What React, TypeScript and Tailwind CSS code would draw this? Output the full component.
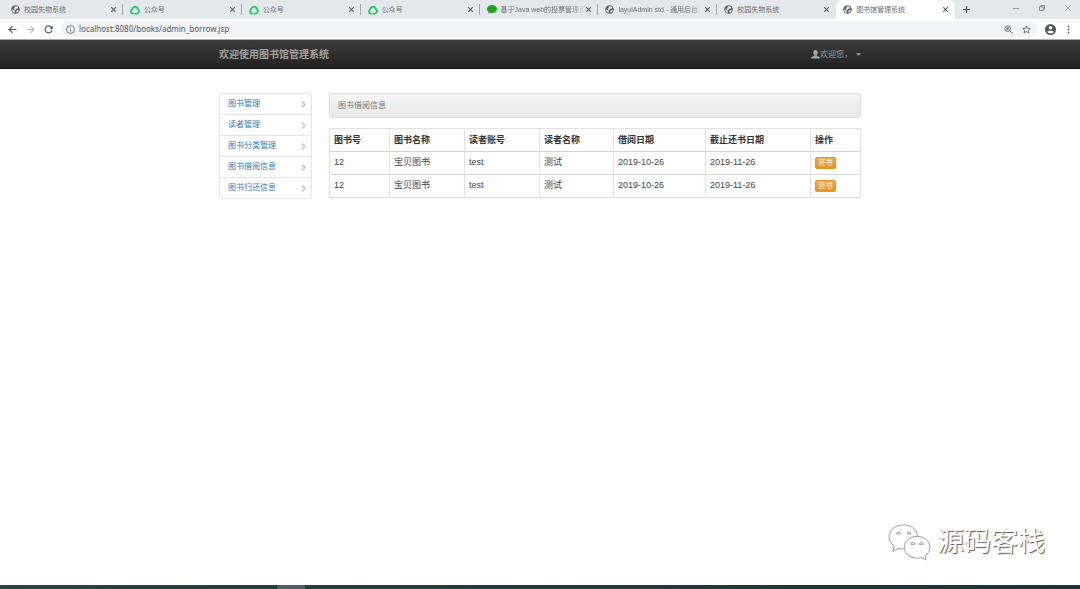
import type { ReactNode } from "react";

type TabIcon = "globe" | "ring" | "wechat";

const tabs: { title: string; icon: TabIcon; active?: boolean }[] = [
  { title: "校园失物系统", icon: "globe" },
  { title: "公众号", icon: "ring" },
  { title: "公众号", icon: "ring" },
  { title: "公众号", icon: "ring" },
  { title: "基于Java web的投票管理系", icon: "wechat" },
  { title: "layuiAdmin std - 通用后台", icon: "globe" },
  { title: "校园失物系统", icon: "globe" },
  { title: "图书馆管理系统", icon: "globe", active: true },
];

const menu = ["图书管理", "读者管理", "图书分类管理", "图书借阅信息", "图书归还信息"];

const columns = [
  { label: "图书号", width: "w-[60px]" },
  { label: "图书名称", width: "w-[75px]" },
  { label: "读者账号", width: "w-[75px]" },
  { label: "读者名称", width: "w-[74px]" },
  { label: "借阅日期", width: "w-[92px]" },
  { label: "截止还书日期", width: "w-[105px]" },
  { label: "操作", width: "w-[50px]" },
];

const rows = [
  ["12", "宝贝图书", "test", "测试", "2019-10-26", "2019-11-26"],
  ["12", "宝贝图书", "test", "测试", "2019-10-26", "2019-11-26"],
];

function Favicon({ icon }: { icon: TabIcon }) {
  if (icon === "ring") {
    return (
      <svg viewBox="0 0 20 20" className="size-[10px] shrink-0" fill="none" stroke="#1fcf70" strokeWidth="3.8" strokeLinecap="round">
        <path d="M4.800 7.400a5.500 5.500 0 0 1 10.400-.6" />
        <path d="M16 8.400c3.600 3.400 1.600 8.600-3 8.800H10.500" />
        <path d="M3.800 9.400c-3.400 3.600-1.200 7.600 2.400 7.800" />
      </svg>
    );
  }
  if (icon === "wechat") {
    return (
      <svg viewBox="0 0 20 18" className="h-[9px] w-[10px] shrink-0">
        <path fill="#1aad19" d="M10 0c5.600 0 10 3.500 10 8s-4.400 8-10 8c-1.200 0-2.300-.1-3.400-.4L2.800 18l.8-3.600C1.400 12.900 0 10.600 0 8c0-4.500 4.400-8 10-8z" />
        <circle cx="6.5" cy="6" r="1.300" fill="#0b7010" />
        <circle cx="13.500" cy="6" r="1.300" fill="#0b7010" />
      </svg>
    );
  }
  return (
    <svg viewBox="0 0 20 20" className="size-[9px] shrink-0">
      <circle cx="10" cy="10" r="9.500" fill="#5a5f64" />
      <path fill="#e8ebed" d="M8 3.200 13 2.600l3 3-1.500 3-3.200-.4-1 2.600-3 .2-1.600-2.400 2.400-1.400zM2.200 9.500l3.600 2.400 3.200.8-.8 4.600C4.600 16.800 2 13.600 2.200 9.500zM13 11.500l4.300-.5c-.3 3-2 5-4.300 6l-1.200-3z" />
    </svg>
  );
}

function CloseMark() {
  return (
    <svg viewBox="0 0 10 10" className="size-[5px]" stroke="#5f6368" strokeWidth="2.400">
      <path d="M0 0l10 10M10 0L0 10" />
    </svg>
  );
}

function TabStrip() {
  return (
    <div className="flex h-[19px] bg-[#e4e8eb] pl-1">
      <div className="flex min-w-0 flex-1">
        {tabs.map((tab, i) => (
          <div
            key={i}
            className={`flex min-w-0 flex-1 items-center pl-[7px] ${tab.active ? "rounded-t-md bg-white" : ""}`}
          >
            <Favicon icon={tab.icon} />
            <span
              className={`ml-1 min-w-0 flex-1 whitespace-nowrap pt-px text-[7px] text-[#6b7075] ${tab.title.length > 12 ? "mask-r-from-80%" : ""}`}
            >
              {tab.title}
            </span>
            <button aria-label="关闭标签页" className="mr-[6px]">
              <CloseMark />
            </button>
            <span className={`h-[11px] w-px ${i < 6 ? "bg-[#a3a8ad]" : ""}`} />
          </div>
        ))}
      </div>
      <div className="flex w-[125px] items-center justify-between pl-2 pr-[9px]">
        <button aria-label="新标签页">
          <svg viewBox="0 0 14 14" className="size-[7px]" stroke="#4d5156" strokeWidth="2.400">
            <path d="M7 0v14M0 7h14" />
          </svg>
        </button>
        <div className="flex items-center gap-5 pb-1">
          <button aria-label="最小化">
            <svg viewBox="0 0 6 6" className="size-[6px]" stroke="#9a9da0">
              <path d="M0 3.500h6" />
            </svg>
          </button>
          <button aria-label="还原">
            <svg viewBox="0 0 12 12" className="size-[6px]" fill="none" stroke="#777b80" strokeWidth="1.600">
              <path d="M1 3.500h7.500V11H1zM3.500 3.500V1H11v7.500H8.500" />
            </svg>
          </button>
          <button aria-label="关闭">
            <svg viewBox="0 0 12 12" className="size-[6px]" stroke="#888c90" strokeWidth="1.400">
              <path d="M0 0l12 12M12 0L0 12" />
            </svg>
          </button>
        </div>
      </div>
    </div>
  );
}

function ToolButton({ label, children }: { label: string; children: ReactNode }) {
  return (
    <button aria-label={label} className="shrink-0">
      {children}
    </button>
  );
}

function AddressBar() {
  return (
    <div className="flex h-[21px] items-center border-b border-[#a9abad] bg-white pl-2 pr-[10px]">
      <div className="flex items-center gap-[9px]">
        <ToolButton label="后退">
          <svg viewBox="0 0 16 16" className="size-[9px]" fill="none" stroke="#55595e" strokeWidth="2">
            <path d="M15 8H2M8 2L2 8l6 6" />
          </svg>
        </ToolButton>
        <ToolButton label="前进">
          <svg viewBox="0 0 16 16" className="size-[9px]" fill="none" stroke="#b4b7ba" strokeWidth="2">
            <path d="M1 8h13M8 2l6 6-6 6" />
          </svg>
        </ToolButton>
        <ToolButton label="重新加载">
          <svg viewBox="0 0 16 16" className="size-[9px]" fill="none" stroke="#55595e" strokeWidth="2">
            <path d="M13.500 4.500A6.300 6.300 0 1 0 14.300 9" />
            <path fill="#55595e" stroke="none" d="M15.500 1v6h-6z" />
          </svg>
        </ToolButton>
      </div>
      <div className="ml-2 flex h-4 min-w-0 flex-1 items-center rounded-full bg-[#f1f3f4] pl-[5px] pr-[6px]">
        <svg viewBox="0 0 16 16" className="size-[9px] shrink-0" fill="none" stroke="#5f6368" strokeWidth="1.500">
          <circle cx="8" cy="8" r="7" />
          <path d="M8 7v5M8 4v1.700" />
        </svg>
        <input
          aria-label="地址"
          defaultValue="localhost:8080/books/admin_borrow.jsp"
          className="ml-1 min-w-0 flex-1 bg-transparent font-['Noto_Sans',sans-serif] text-[8px] leading-4 text-[#55595e] outline-none"
        />
        <div className="flex items-center gap-[9px]">
          <ToolButton label="缩放">
            <svg viewBox="0 0 16 16" className="size-[9px]" fill="none" stroke="#5f6368" strokeWidth="1.700">
              <circle cx="6.500" cy="6.500" r="5" />
              <path d="M10.500 10.500L15 15M4 6.500h5M6.500 4v5" />
            </svg>
          </ToolButton>
          <ToolButton label="收藏">
            <svg viewBox="0 0 16 16" className="size-[9px]" fill="none" stroke="#5f6368" strokeWidth="1.600">
              <path d="M8 1.500l1.900 4.400 4.800.4-3.600 3.200 1.100 4.700L8 11.700l-4.200 2.500 1.100-4.700L1.300 6.300l4.800-.4z" />
            </svg>
          </ToolButton>
        </div>
      </div>
      <div className="ml-2 flex items-center gap-[11px]">
        <ToolButton label="用户">
          <svg viewBox="0 0 22 22" className="size-[11px]">
            <circle cx="11" cy="11" r="11" fill="#55595e" />
            <circle cx="11" cy="7.500" r="3.400" fill="#fff" />
            <path fill="#fff" d="M4.500 15.500c1-3 12-3 13 0-2.500 4-10.500 4-13 0z" />
          </svg>
        </ToolButton>
        <ToolButton label="菜单">
          <svg viewBox="0 0 6 18" className="h-[9px] w-[3px]" fill="#5f6368">
            <circle cx="3" cy="3" r="1.900" />
            <circle cx="3" cy="9" r="1.900" />
            <circle cx="3" cy="15" r="1.900" />
          </svg>
        </ToolButton>
      </div>
    </div>
  );
}

function Navbar() {
  return (
    <nav className="h-[29px] border-b border-[#101010] bg-linear-to-b from-[#3c3c3c] to-[#222222]">
      <div className="mx-auto flex h-full max-w-[642px] items-center justify-between">
        <a href="#" className="text-[10px] font-bold text-[#a2a2a2]">
          欢迎使用图书馆管理系统
        </a>
        <button className="flex items-center text-[8px] text-[#9d9d9d]">
          <svg viewBox="0 0 16 16" className="size-[9px]" fill="#a8a8a8">
            <path d="M8 0c2.500 0 4 1.800 4 4.500 0 2-.9 3.700-2 4.500v1.200c2 1 5 1.800 5.500 3.300V15H.5v-1.500C1 12 4 11.200 6 10.200V9C4.900 8.200 4 6.500 4 4.500 4 1.800 5.500 0 8 0z" />
          </svg>
          <span className="pt-px">欢迎您，</span>
          <svg viewBox="0 0 10 5" className="ml-1 h-[3px] w-[5px]" fill="#a8a8a8">
            <path d="M0 0h10L5 5z" />
          </svg>
        </button>
      </div>
    </nav>
  );
}

function Sidebar() {
  return (
    <aside className="w-[93px] shrink-0">
      <ul className="divide-y divide-[#e5e5e5] rounded-[3px] border border-[#e5e5e5]">
        {menu.map((item) => (
          <li key={item}>
            <a href="#" className="flex h-5 items-center justify-between pl-2 pr-[5px] text-[8px] text-[#337ab7]">
              {item}
              <svg viewBox="0 0 8 12" className="h-[7px] w-[5px]" fill="none" stroke="#bccddb" strokeWidth="3">
                <path d="M1.500 1l5 5-5 5" />
              </svg>
            </a>
          </li>
        ))}
      </ul>
    </aside>
  );
}

function BorrowTable() {
  return (
    <table className="mt-[10px] w-full table-fixed border-collapse border border-[#e2e2e2] text-[9px] text-[#444444]">
      <thead>
        <tr className="h-[23px] border-b border-[#d4d4d4]">
          {columns.map((col) => (
            <th key={col.label} className={`${col.width} border-x border-[#e2e2e2] px-1 pt-px text-left font-bold text-[#333333]`}>
              {col.label}
            </th>
          ))}
        </tr>
      </thead>
      <tbody>
        {rows.map((row, i) => (
          <tr key={i} className="h-[23px] border-b border-[#d8d8d8]">
            {row.map((cell, j) => (
              <td key={j} className="border-x border-[#e2e2e2] px-1">
                {cell}
              </td>
            ))}
            <td className="px-1">
              <button className="block h-3 w-[21px] rounded-[2px] border border-[#e8951f] bg-linear-to-b from-[#f0ad4e] to-[#eb9316] text-[7px] leading-[10px] text-white">
                还书
              </button>
            </td>
          </tr>
        ))}
      </tbody>
    </table>
  );
}

function Watermark() {
  return (
    <div className="flex items-center gap-[6px] self-end pb-6 pr-[35px]">
      <svg viewBox="0 0 46 40" className="h-[38px] w-11" fill="#fff" stroke="#9a9a9a" strokeWidth="1">
        <path d="M17 2C8.500 2 2 7.500 2 14.500c0 4 2 7.300 5.400 9.600L6 30l6.300-3.300c1.500.4 3.100.6 4.700.6 8.500 0 15-5.800 15-12.800S25.500 2 17 2z" />
        <path d="M31.500 14C24 14 18 19 18 25.500S24 37 31.500 37c1.500 0 3-.2 4.400-.6L41 39l-1.200-4.500c3.200-2.200 5.200-5.300 5.200-9C45 19 39 14 31.500 14z" />
        <path d="M10 11.500a2 2 0 0 1 4 0zM21 11.500a2 2 0 0 1 4 0zM25 22.500a2 2 0 0 1 4 0zM34 22.500a2 2 0 0 1 4 0z" />
      </svg>
      <span className="text-[27px] leading-[38px] text-white [text-shadow:1px_1px_1px_#555555]">源码客栈</span>
    </div>
  );
}

export default function App() {
  return (
    <div className="flex min-h-screen flex-col bg-white font-['Liberation_Sans','Noto_Sans_CJK_SC',sans-serif]">
      <TabStrip />
      <AddressBar />
      <Navbar />
      <main className="mx-auto flex w-full max-w-[642px] flex-1 gap-[17px] pt-6">
        <Sidebar />
        <section className="min-w-0 flex-1">
          <h1 className="flex h-[25px] items-center rounded-[3px] border border-[#dfdfdf] bg-linear-to-b from-[#f5f5f5] to-[#e8e8e8] pl-2 text-[8px] text-[#777777]">
            图书借阅信息
          </h1>
          <BorrowTable />
        </section>
      </main>
      <Watermark />
      <footer className="h-[4px] bg-linear-to-r from-[#24443f] to-[#1c323e] pl-[277px]">
        <div className="h-full w-7 bg-[#4b6068]" />
      </footer>
    </div>
  );
}
